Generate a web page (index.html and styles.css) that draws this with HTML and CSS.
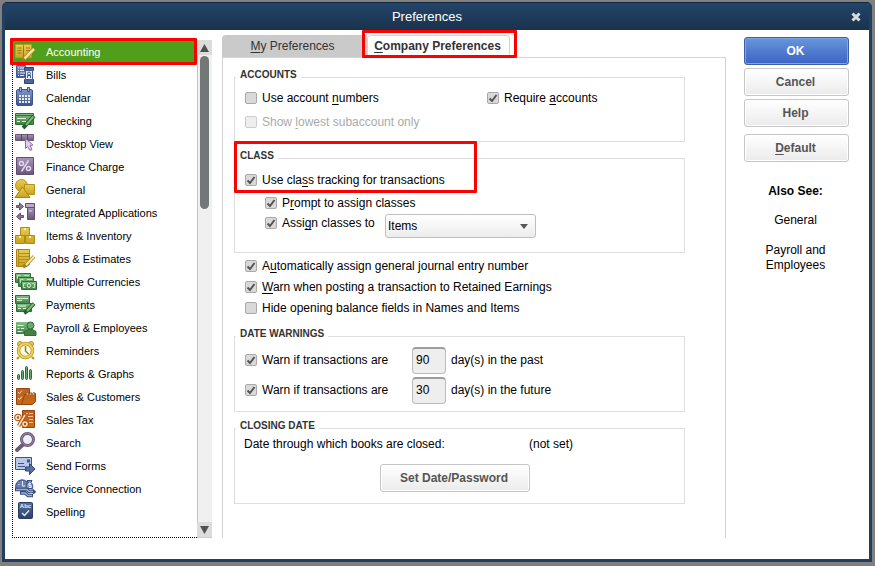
FILE: index.html
```
<!DOCTYPE html>
<html lang="en">
<head>
    <meta charset="UTF-8">
    <title>Preferences</title>
    <link rel="stylesheet" href="styles.css">
</head>
<body>
<!-- shared gradients for the icons -->
<svg class="defs" aria-hidden="true">
    <defs>
        <linearGradient id="gold" x1="0" y1="0" x2="0" y2="1"><stop offset="0" stop-color="#e8cd55"/><stop offset="1" stop-color="#c9a21c"/></linearGradient>
        <linearGradient id="blue" x1="0" y1="0" x2="0" y2="1"><stop offset="0" stop-color="#8398c8"/><stop offset="1" stop-color="#3c5488"/></linearGradient>
        <linearGradient id="green" x1="0" y1="0" x2="0" y2="1"><stop offset="0" stop-color="#83c086"/><stop offset="1" stop-color="#3f7f46"/></linearGradient>
        <linearGradient id="purple" x1="0" y1="0" x2="0" y2="1"><stop offset="0" stop-color="#a999b9"/><stop offset="1" stop-color="#685677"/></linearGradient>
        <linearGradient id="orange" x1="0" y1="0" x2="0" y2="1"><stop offset="0" stop-color="#b8612a"/><stop offset="1" stop-color="#d0690c"/></linearGradient>
        <linearGradient id="navy" x1="0" y1="0" x2="0" y2="1"><stop offset="0" stop-color="#5c6f9a"/><stop offset="1" stop-color="#2d3f68"/></linearGradient>
    </defs>
</svg>

<div class="window">
    <header class="titlebar">
        <h1>Preferences</h1>
        <button class="close" aria-label="Close">
            <svg viewBox="0 0 10 10" width="10" height="10"><path d="M1.5 1.5L8.5 8.5M8.5 1.5L1.5 8.5" stroke="#dcdcdc" stroke-width="3"/></svg>
        </button>
    </header>

    <div class="content">
        <div class="sidebar">
            <ul class="menu">
                <li><a href="#" class="active">
                    <svg viewBox="0 0 22 22"><path d="M1.5 3.5h7l1 1 1-1h7v13h-7l-1 1-1-1h-7z" fill="url(#gold)" stroke="#c39b1b"/><path d="M9.5 5v11M3.500 7h4M3.500 9.500h4M3.500 12h4M12 7h4M12 9.500h4" stroke="#9b7a10"/><path d="M20 8L11 17l-3 2" stroke="#a87f22" stroke-width="4" fill="none"/><path d="M20 8L10.500 17.500" stroke="#f8e2a0" stroke-width="2.500"/></svg>
                    Accounting</a><span class="highlight highlight-item"></span></li>
                <li><a href="#">
                    <svg viewBox="0 0 22 22"><path d="M2.500 1.500h9v12h-9z" fill="url(#blue)" stroke="#465f96"/><path d="M4 4h1M6 4h5M4 6.500h1M6 6.500h5M4 9h1M6 9h5M4 11.500h1M6 11.500h4" stroke="#e3eafa"/><path d="M10.500 3.500h9v3h-9zM10.500 15.500h9v4h-9z" fill="#4a6398" stroke="#30466f"/><path d="M11.500 6.500h7v9h-7z" fill="#e6edf9" stroke="#455e91"/><circle cx="15" cy="9.500" r="1.500" fill="none" stroke="#3c5486"/><path d="M13.500 14v-2.500h3V14" fill="none" stroke="#3c5486"/></svg>
                    Bills</a></li>
                <li><a href="#">
                    <svg viewBox="0 0 22 22"><rect x="2.500" y="2.500" width="16" height="16" rx="1.500" fill="url(#blue)" stroke="#3f5485"/><path d="M5.500.5h2v4h-2zM13.500.5h2v4h-2z" fill="#a9b8da" stroke="#3f5485"/><path d="M5 9h11M5 12h11M5 15h11" stroke="#e3eafa" stroke-width="2" stroke-dasharray="2 1"/></svg>
                    Calendar</a></li>
                <li><a href="#">
                    <svg viewBox="0 0 22 22"><path d="M1.500 3.500h18v11h-18z" fill="url(#green)" stroke="#2f7239"/><path d="M2 5.500h17" stroke="#2f7239"/><path d="M3 8.500h9M3 11.500h3M8 11.500h4" stroke="#e4f6e0"/><path d="M20 6L12 15l-3 3" stroke="#275f2c" stroke-width="4"/><path d="M19.500 6.500L12 15" stroke="#7fba7b" stroke-width="2"/></svg>
                    Checking</a></li>
                <li><a href="#">
                    <svg viewBox="0 0 22 22"><path d="M1.500 1.500h18v6h-18z" fill="url(#purple)" stroke="#6d5b7a"/><path d="M7.500 1v7M13.500 1v7" stroke="#55445f"/><path d="M11.500 5.500v10l2-2 2.500 4 2-1-2-4 3-.5z" fill="#e3cdf2" stroke="#85709a"/></svg>
                    Desktop View</a></li>
                <li><a href="#">
                    <svg viewBox="0 0 22 22"><path d="M2.500 1.500h17v17h-17z" fill="url(#purple)" stroke="#604e6c"/><path d="M14.500 4.500l-7 11" stroke="#e7d5f4" stroke-width="1.500"/><circle cx="7.500" cy="7.500" r="2" fill="none" stroke="#e7d5f4" stroke-width="1.500"/><circle cx="14.500" cy="12.500" r="2" fill="none" stroke="#e7d5f4" stroke-width="1.500"/></svg>
                    Finance Charge</a></li>
                <li><a href="#">
                    <svg viewBox="0 0 22 22"><circle cx="7.500" cy="6.500" r="6" fill="url(#gold)" stroke="#b89218"/><path d="M10.500 5.500h10v10h-10z" fill="url(#gold)" stroke="#b89218"/><path d="M8.500 8L16 18.500H1z" fill="url(#gold)" stroke="#a98412"/></svg>
                    General</a></li>
                <li><a href="#">
                    <svg viewBox="0 0 22 22"><path d="M2.500 3.500h3v-2.500l4 3.500-4 3.500V5.500h-3z" fill="#8b789a" stroke="#604e6c"/><path d="M9.500 13.500h-3v-2.500l-4 3.500 4 3.500v-2.500h3z" fill="#8b789a" stroke="#604e6c"/><path d="M13.500 5h7v12.500h-7z" fill="url(#purple)" stroke="#604e6c"/><path d="M11.500 1.500h9v4h-9z" fill="#bcaac9" stroke="#604e6c"/><path d="M15 9h3" stroke="#e7d5f4"/></svg>
                    Integrated Applications</a></li>
                <li><a href="#">
                    <svg viewBox="0 0 22 22"><path d="M6.500 2.500h9v8h-9zM1.500 10.500h9v8h-9zM11.500 10.500h9v8h-9z" fill="url(#gold)" stroke="#b08b12"/><path d="M10 3h2v2h-2zM5 11h2v2H5zM15 11h2v2h-2z" fill="#faf0b4"/></svg>
                    Items &amp; Inventory</a></li>
                <li><a href="#">
                    <svg viewBox="0 0 22 22"><path d="M2.500 1.500h13v15l-3 2h-10z" fill="url(#gold)" stroke="#a98412"/><path d="M4.500 2v16M5 5.500h10M5 8.500h10M5 11.500h10M5 14.500h6" stroke="#b38e18"/><path d="M20 8.500L12 17l-3 2" stroke="#a87f22" stroke-width="3.500"/><path d="M20 8.500L12 17" stroke="#f8e9b8" stroke-width="2"/></svg>
                    Jobs &amp; Estimates</a></li>
                <li><a href="#">
                    <svg viewBox="0 0 22 22"><g fill="url(#green)" stroke="#2f6e36"><path d="M1.500 2.500h15v9h-15z"/><path d="M4.500 6.500h15v9h-15z"/><path d="M7.500 10.500h15v8h-15z"/></g><path d="M3.500 8v-3.500h3M10 4.500h5M6.500 12v-3.500h3M13 8.500h5" stroke="#bfe3bd" fill="none"/><path d="M9.500 16.500v-4h2M9.500 16.500h2M20.500 16.500v-4h-2M20.500 16.500h-2" stroke="#bfe3bd" fill="none"/><ellipse cx="15" cy="14.500" rx="1.500" ry="2" fill="#4f8d54" stroke="#e4f6e0"/></svg>
                    Multiple Currencies</a></li>
                <li><a href="#">
                    <svg viewBox="0 0 22 22"><path d="M1.500 1.500h14v8h-14z" fill="url(#green)" stroke="#2f6e36"/><path d="M3 4.500h11M3 6.500h5" stroke="#d6f2d4"/><path d="M2.500 9.500h15v8h-15z" fill="url(#green)" stroke="#2f6e36"/><path d="M4 12h8M4 14.500h3M9 14.500h3" stroke="#e4f6e0"/><path d="M20 9.500L13 17l-3 2" stroke="#275f2c" stroke-width="4"/><path d="M19.500 10L13 17" stroke="#7fba7b" stroke-width="2"/></svg>
                    Payments</a></li>
                <li><a href="#">
                    <svg viewBox="0 0 22 22"><path d="M2 5h17v12H2z" fill="url(#green)"/><path d="M3.500 8.500h6M3.500 11.500h2M7 11.500h3M3.500 14.500h5" stroke="#e4f6e0"/><path d="M10.500 18.500v-4l4-2h4l3.500 2v4z" fill="#477f49" stroke="#2f6e36"/><circle cx="16.500" cy="8.500" r="3.500" fill="#6da86c" stroke="#2f6e36"/></svg>
                    Payroll &amp; Employees</a></li>
                <li><a href="#">
                    <svg viewBox="0 0 22 22"><path d="M5 17l-2 2M18 17l2 2" stroke="#b5911f" stroke-width="2"/><circle cx="6" cy="4" r="2.500" fill="#e8cf62" stroke="#b5911f"/><circle cx="17" cy="4" r="2.500" fill="#e8cf62" stroke="#b5911f"/><circle cx="11.500" cy="10.500" r="7" fill="#fdfbe8" stroke="#b5911f" stroke-width="3.500"/><circle cx="11.500" cy="10.500" r="7" fill="none" stroke="#ecd257" stroke-width="2"/><path d="M11.500 6v5l3 3" stroke="#9c7c18" stroke-width="1.500" fill="none"/></svg>
                    Reminders</a></li>
                <li><a href="#">
                    <svg viewBox="0 0 22 22"><g fill="#69a96c" stroke="#2f6a37"><rect x="3.500" y="11.500" width="2" height="5" rx="1"/><rect x="7.500" y="7.500" width="2" height="9" rx="1"/><rect x="11.500" y="3.500" width="2" height="13" rx="1"/><rect x="15.500" y="6.500" width="2" height="10" rx="1"/></g></svg>
                    Reports &amp; Graphs</a></li>
                <li><a href="#">
                    <svg viewBox="0 0 22 22"><path d="M2.500 2.500h13v16h-13z" fill="url(#orange)" stroke="#944710"/><path d="M4 6l1.500 1.500 2.500-3M4 12l1.500 1.500 2.500-3" stroke="#f6cfa5" fill="none"/><path d="M10.500 8.500h3l1-2 1.500 2 1-2 1.500 2 1-2 2 1v8l-3 3h-11z" fill="url(#orange)" stroke="#944710"/><path d="M13 9l1-2M16 9l1-2M19 9l1-2" stroke="#f3c08f"/></svg>
                    Sales &amp; Customers</a></li>
                <li><a href="#">
                    <svg viewBox="0 0 22 22"><path d="M8.500 1.500h12v17h-12z" fill="url(#orange)" stroke="#944710"/><path d="M12 4.500h2M15 4.500h4M14 7.500h5M15 10.500h4M15 13.500h4" stroke="#f3c08f"/><g stroke="#b0540d" stroke-width="3.500" fill="none"><path d="M11 6L4.500 17"/><circle cx="4" cy="8.500" r="2"/><circle cx="11" cy="15" r="2"/></g><g stroke="#ffe4c6" stroke-width="1.500" fill="none"><path d="M11 6L4.500 17"/><circle cx="4" cy="8.500" r="2"/><circle cx="11" cy="15" r="2"/></g></svg>
                    Sales Tax</a></li>
                <li><a href="#">
                    <svg viewBox="0 0 22 22"><path d="M9 12.500L3 18" stroke="#6b5a78" stroke-width="4" stroke-linecap="round"/><circle cx="13.500" cy="7.500" r="6" fill="#f1edf5" stroke="#6b5a78" stroke-width="3"/><circle cx="13.500" cy="7.500" r="6" fill="none" stroke="#9a89a7"/></svg>
                    Search</a></li>
                <li><a href="#">
                    <svg viewBox="0 0 22 22"><path d="M1.500 2.500h16v12h-16z" fill="#b9c9ea" stroke="#3c5488"/><path d="M13 4.500h3v3h-3z" fill="#3c5488"/><path d="M4 8.500h6M4 11.500h7" stroke="#3c5488"/><path d="M11.500 12h4V8.500l5.500 5.500-5.500 5.500V16h-4z" fill="#56709f" stroke="#2f4675"/></svg>
                    Send Forms</a></li>
                <li><a href="#">
                    <svg viewBox="0 0 22 22"><path d="M2 10.500a6.500 6.500 0 1 1 12.500-1v1z" fill="#6a80b2" stroke="#364c7d"/><path d="M8.500 3v5h3M4.500 6l1 1" stroke="#e6edf9" fill="none"/><path d="M13 2.500h5l-1 2c2 2 2 4 1.500 6h-6c-.5-2-.5-4 1.500-6z" fill="#8698c0" stroke="#364c7d"/><path d="M17 5.500h-2v2h2v2h-2" stroke="#f3f6ff" fill="none"/><path d="M1 11.500h12l2 2 4-.5 2 2M6 15h5l3 2.500h5" stroke="#364c7d" stroke-width="3.500" fill="none"/><path d="M2 11.500h11l2 2h4M7 15h4l3 2.500h4" stroke="#9badd3" stroke-width="1.500" fill="none"/></svg>
                    Service Connection</a></li>
                <li><a href="#">
                    <svg viewBox="0 0 22 22"><rect x="4.500" y="1.500" width="14" height="16" rx="1" fill="url(#navy)" stroke="#2b3c63"/><text x="11.500" y="7" class="abc">Abc</text><path d="M8 12l2.500 2.500L15 9.500" stroke="#dfe6f5" stroke-width="1.500" fill="none"/></svg>
                    Spelling</a></li>
            </ul>
            <div class="scrollbar">
                <button class="arrow" aria-label="Scroll up"><svg viewBox="0 0 9 8" width="9" height="8"><path d="M4.500 0L9 8H0z" fill="#4f5252"/></svg></button>
                <div class="track"><div class="thumb"></div></div>
                <button class="arrow" aria-label="Scroll down"><svg viewBox="0 0 9 8" width="9" height="8"><path d="M0 0h9L4.500 8z" fill="#4f5252"/></svg></button>
            </div>
        </div>

        <main class="main">
            <div class="tabs">
                <button class="tab"><u>M</u>y Preferences</button>
                <button class="tab selected"><u>C</u>ompany Preferences<span class="highlight highlight-tab"></span></button>
            </div>
            <form class="panel">
                <fieldset class="accounts">
                    <legend>ACCOUNTS</legend>
                    <label class="check"><input type="checkbox"><span>Use account <u>n</u>umbers</span></label>
                    <label class="check"><input type="checkbox" checked><span>Require <u>a</u>ccounts</span></label>
                    <label class="check disabled"><input type="checkbox" disabled><span>Show <u>l</u>owest subaccount only</span></label>
                </fieldset>

                <fieldset class="class-box">
                    <legend>CLASS</legend>
                    <label class="check"><input type="checkbox" checked><span>Use cla<u>s</u>s tracking for transactions</span></label>
                    <div class="sub">
                        <label class="check"><input type="checkbox" checked><span>P<u>r</u>ompt to assign classes</span></label>
                        <div class="assign">
                            <label class="check"><input type="checkbox" checked><span>Assi<u>g</u>n classes to</span></label>
                            <select aria-label="Assign classes to"><option>Items</option></select>
                        </div>
                    </div>
                    <span class="highlight highlight-class"></span>
                </fieldset>

                <div class="loose">
                    <label class="check"><input type="checkbox" checked><span>A<u>u</u>tomatically assign general journal entry number</span></label>
                    <label class="check"><input type="checkbox" checked><span><u>W</u>arn when posting a transaction to Retained Earnings</span></label>
                    <label class="check"><input type="checkbox"><span>Hide opening balance fields in Names and Items</span></label>
                </div>

                <fieldset class="dates">
                    <legend>DATE WARNINGS</legend>
                    <div class="date-row">
                        <label class="check"><input type="checkbox" checked><span>Warn if transactions are</span></label>
                        <input type="text" id="past" class="days" value="90">
                        <label for="past">day(s) in the past</label>
                    </div>
                    <div class="date-row">
                        <label class="check"><input type="checkbox" checked><span>Warn if transactions are</span></label>
                        <input type="text" id="future" class="days" value="30">
                        <label for="future">day(s) in the future</label>
                    </div>
                </fieldset>

                <fieldset class="closing">
                    <legend>CLOSING DATE</legend>
                    <div class="closing-row"><span>Date through which books are closed:</span><span>(not set)</span></div>
                    <button type="button" class="btn btn-date">Set Date/Password</button>
                </fieldset>
            </form>
        </main>

        <aside class="actions">
            <button class="btn primary">OK</button>
            <button class="btn">Cancel</button>
            <button class="btn">Help</button>
            <button class="btn btn-default"><u>D</u>efault</button>
            <h2>Also See:</h2>
            <a href="#">General</a>
            <a href="#">Payroll and Employees</a>
        </aside>
    </div>
</div>
</body>
</html>
```
FILE: styles.css
```
* {
    box-sizing: border-box;
}
body {
    margin: 0;
    padding: 2px 3px 4px 2px;
    background: #808080;
    font: 12px/14px "Liberation Sans", Arial, sans-serif;
    color: #000;
}
button, input, select {
    font: inherit;
    color: inherit;
}
ul, h1, h2 {
    margin: 0;
    padding: 0;
}
a {
    color: inherit;
    text-decoration: none;
}
u {
    text-underline-offset: 2px;
}
.defs {
    position: absolute;
    width: 0;
    height: 0;
}

/* window */
.window {
    display: flex;
    flex-direction: column;
    min-height: calc(100vh - 6px);
    border: 3px solid #223f60;
    border-top: 1px solid #14283c;
    border-radius: 5px 5px 0 0;
    background: #223f60;
}
.titlebar {
    display: flex;
    align-items: center;
    height: 27px;
    background: linear-gradient(#23446a, #1a334c);
}
.titlebar h1 {
    flex: 1;
    font-size: 13px;
    line-height: 16px;
    font-weight: normal;
    text-align: center;
    color: #fff;
}
.close {
    display: flex;
    width: 20px;
    padding: 0 0 0 2px;
    border: 0;
    background: none;
}
.content {
    flex: 1;
    display: flex;
    padding: 5px 20px 21px 7px;
    background: #fff;
}

/* left list */
.sidebar {
    display: flex;
    width: 200px;
    margin: 5px 10px 0 0;
}
.menu {
    flex: 1;
    padding-top: 1px;
    border-left: 1px dotted #000;
    border-bottom: 1px dotted #000;
    list-style: none;
    font-size: 11px;
}
.menu li {
    position: relative;
}
.menu a {
    display: flex;
    height: 23px;
    padding-left: 1px;
    gap: 10px;
    line-height: 23px;
}
.menu a.active {
    background: #4f9f1a;
    color: #fff;
}
.menu svg {
    width: 22px;
    height: 22px;
    overflow: visible;
    fill: none;
}
.abc {
    font-size: 6px;
    font-weight: bold;
    text-anchor: middle;
    fill: #e6ecf8;
}
.scrollbar {
    display: flex;
    flex-direction: column;
    width: 15px;
    background: #f0f0f0;
    border-bottom: 1px solid #ccc;
}
.arrow {
    display: flex;
    align-items: center;
    justify-content: center;
    height: 15px;
    padding: 0;
    border: 0;
    background: #dcdcdc;
}
.track {
    flex: 1;
    padding: 1px 2px;
    border-left: 1px solid #c4c4c4;
}
.thumb {
    width: 9px;
    height: 33%;
    border-radius: 5px;
    background: #727878;
}

/* tabs */
.main {
    flex: 1;
    display: flex;
    flex-direction: column;
    min-width: 0;
}
.tabs {
    display: flex;
    height: 22px;
}
.tab {
    padding: 0 4px 0 0;
    width: 145px;
    border: 0;
    border-radius: 4px 0 0 0;
    background: #cacaca;
    color: #333;
    text-align: center;
}
.tab.selected {
    position: relative;
    z-index: 1;
    width: 143px;
    height: 23px;
    padding: 0 2px 2px 0;
    border: 1px solid #d4d4d4;
    border-bottom: 0;
    border-radius: 4px 4px 0 0;
    background: #fff;
    font-weight: bold;
}
.panel {
    flex: 1;
    padding: 10px 40px 0 11px;
    border: 1px solid #d4d4d4;
    border-bottom: 0;
}

/* groups */
fieldset {
    position: relative;
    min-width: 0;
    margin: 0;
    padding: 0 10px;
    border: 1px solid #dedede;
}
legend {
    margin-left: -9px;
    padding: 1px 4px 5px;
    font-size: 10px;
    line-height: 12px;
    font-weight: bold;
    color: #333;
}
.check {
    display: flex;
    align-items: center;
    gap: 5px;
}
.check input {
    appearance: none;
    width: 12px;
    height: 12px;
    margin: 0;
    border: 1px solid #a9a9a9;
    border-radius: 2px;
    background: #d9d9d9;
}
.check input:checked {
    background: #d9d9d9 url("data:image/svg+xml,%3Csvg xmlns='http://www.w3.org/2000/svg' viewBox='0 0 10 10'%3E%3Cpath d='M1.500 5.500l2.500 2.500 4.500-6' fill='none' stroke='%23555' stroke-width='2'/%3E%3C/svg%3E");
}
.disabled {
    color: #aaa;
}
.disabled input {
    border-color: #ccc;
    background: #eee;
}
.accounts {
    display: grid;
    grid-template-columns: 242px 1fr;
    grid-auto-rows: 24px;
    padding-bottom: 7px;
}
.class-box {
    margin-top: 7px;
    padding-bottom: 14px;
}
.class-box > .check {
    height: 25px;
}
.sub {
    padding-left: 20px;
}
.sub > .check {
    height: 22px;
}
.assign {
    display: flex;
    align-items: flex-start;
}
.assign .check {
    width: 120px;
    height: 18px;
}
select {
    appearance: none;
    width: 151px;
    height: 24px;
    padding: 0 2px;
    border: 1px solid #bfbfbf;
    border-radius: 3px;
    background: url("data:image/svg+xml,%3Csvg xmlns='http://www.w3.org/2000/svg' width='8' height='5'%3E%3Cpath d='M0 0h8L4 5z' fill='%23555'/%3E%3C/svg%3E") no-repeat right 7px center, linear-gradient(#fff, #ececec);
}
.loose {
    margin-top: 2px;
    padding-left: 11px;
}
.loose .check {
    height: 21px;
}
.dates {
    margin-top: 9px;
    padding-bottom: 6px;
}
.date-row {
    display: flex;
    align-items: center;
    height: 30px;
}
.date-row .check {
    width: 167px;
}
.days {
    width: 34px;
    height: 27px;
    margin-right: 5px;
    padding: 0 3px 2px;
    border: 1px solid #bbb;
    border-top: 2px solid #9c9c9c;
    border-radius: 4px;
    background: #eee;
}
.closing {
    margin-top: 7px;
    padding: 0 18px 11px 9px;
}
.closing legend {
    margin-left: -8px;
}
.closing-row {
    display: grid;
    grid-template-columns: 285px 1fr;
}

/* buttons */
.btn {
    height: 28px;
    padding: 0 2px 0 0;
    border: 1px solid #c6c6c6;
    border-radius: 3px;
    background: linear-gradient(#fff, #ebebeb);
    box-shadow: inset 0 0 0 1px #fff;
    font-weight: bold;
    color: #555;
}
.btn.primary {
    border-color: #3a5fa5;
    background: linear-gradient(#6796dc, #3c63c4);
    box-shadow: inset 0 0 0 1px #7fa6e4;
    color: #fff;
}
.btn-date {
    display: block;
    width: 150px;
    margin: 13px auto 0;
}
.actions {
    display: flex;
    flex-direction: column;
    gap: 3px;
    width: 105px;
    margin-left: 18px;
    padding-top: 2px;
    text-align: center;
}
.btn-default {
    margin-top: 4px;
}
.actions h2 {
    margin: 19px 2px 11px 0;
    font-size: 12px;
    line-height: 15px;
}
.actions a {
    margin: 0 20px 12px 18px;
    line-height: 15px;
}

/* red marker frames */
.highlight {
    position: absolute;
    border: 3px solid #f00;
    border-radius: 1px;
    pointer-events: none;
}
.highlight-item {
    top: -3px;
    right: 0;
    bottom: -1px;
    left: -3px;
    z-index: 1;
}
.highlight-tab {
    top: -6px;
    right: -8px;
    bottom: 0;
    left: -6px;
}
.highlight-class {
    top: -26px;
    left: -1px;
    width: 243px;
    height: 52px;
}
```
